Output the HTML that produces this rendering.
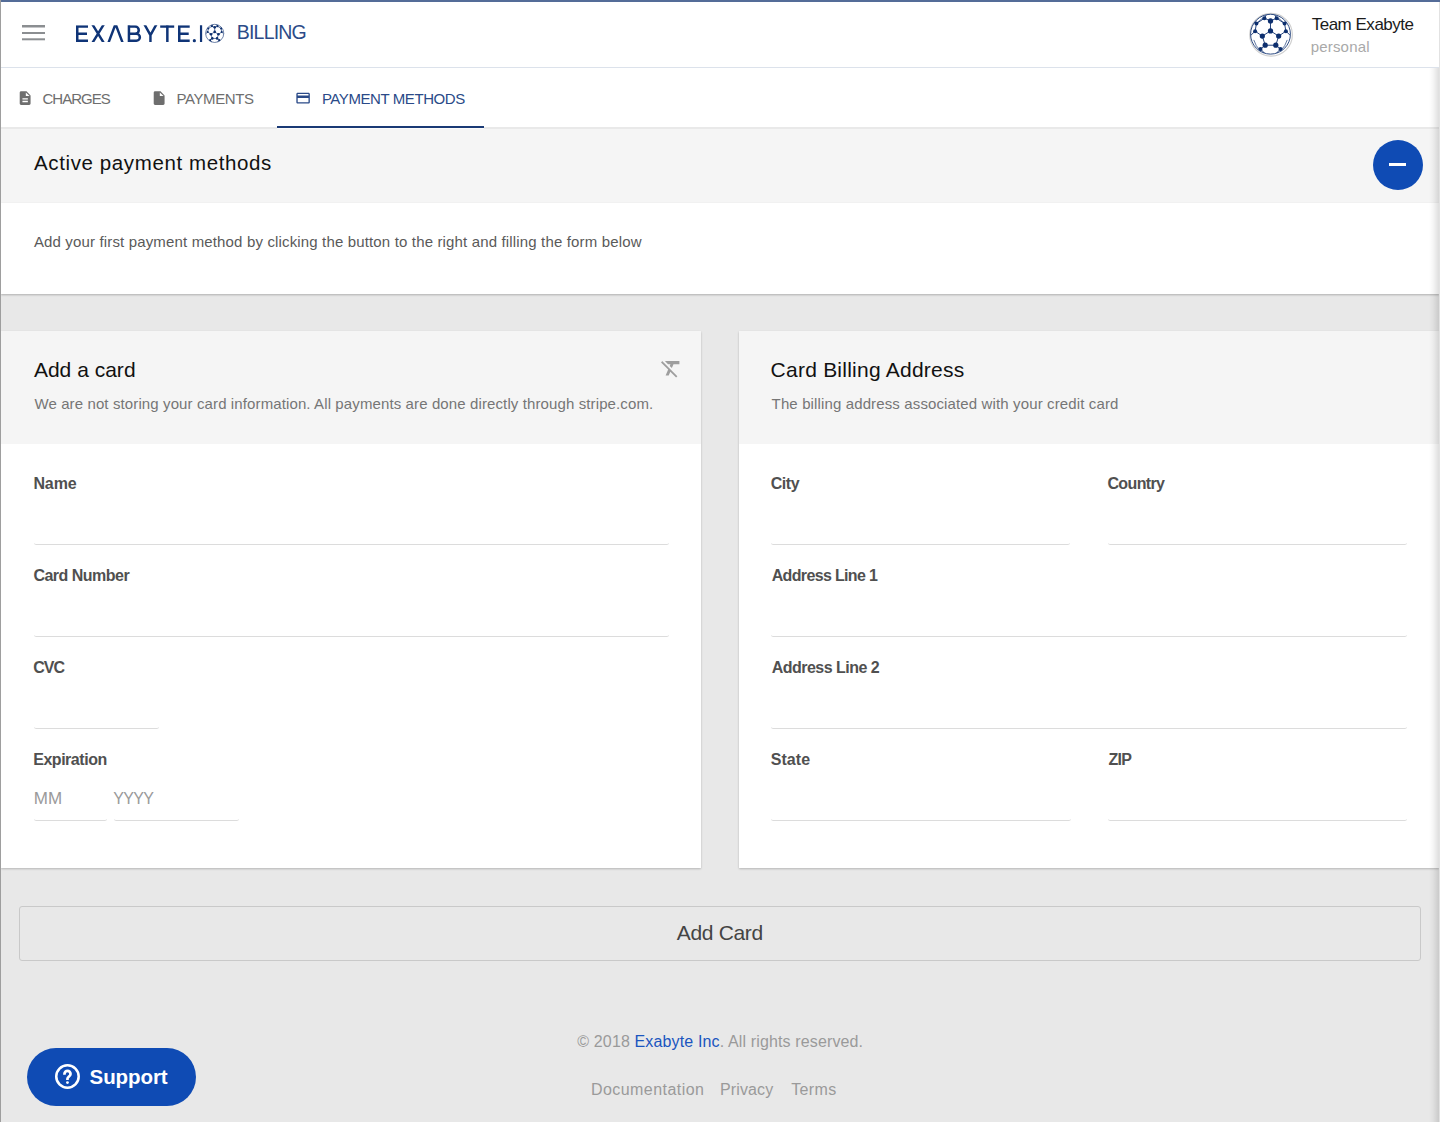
<!DOCTYPE html>
<html><head><meta charset="utf-8">
<style>
*{box-sizing:border-box;margin:0;padding:0}
html,body{width:1440px;height:1122px;overflow:hidden;background:#e8e8e8;font-family:"Liberation Sans",sans-serif}
.a{position:absolute}
.t{position:absolute;white-space:nowrap;line-height:1}
#topline{left:0;top:0;width:1440px;height:2px;background:#546c98}
#leftline{left:0;top:0;width:1px;height:1122px;background:#9e9e9e;z-index:50}
#header{left:1px;top:2px;width:1438px;height:66px;background:#fff;border-bottom:1px solid #dce2eb}
#rstrip{left:1439px;top:2px;width:1px;height:1120px;background:#e2e2e2;z-index:40}
#tabs{left:1px;top:68px;width:1438px;height:60px;background:#fff}
#tabline{left:1px;top:127px;width:1438px;height:2px;background:#e9e9e9}
#uline{left:277px;top:126px;width:207px;height:2px;background:#1a3a75;box-shadow:0 1px 0 #fbfbfb}
#sec1h{left:1px;top:129px;width:1438px;height:74px;background:#f5f5f5}
#sec1b{left:1px;top:203px;width:1438px;height:91px;background:#fff;box-shadow:0 1px 2px rgba(0,0,0,.25)}
#fab{left:1373px;top:140px;width:50px;height:50px;border-radius:50%;background:#0f4bb4}
#fabbar{left:1389px;top:162.75px;width:17px;height:2.8px;background:#fff}
.card{top:331px;width:700px;height:537px;background:#fff;box-shadow:0 1px 2px rgba(0,0,0,.22)}
.cardh{left:0;top:0;width:700px;height:113px;background:#f5f5f5}
#rshadow{left:1429px;top:68px;width:10px;height:1054px;background:linear-gradient(to right,rgba(0,0,0,0),rgba(0,0,0,.035) 40%,rgba(0,0,0,.13));z-index:30}
.ul{position:absolute;height:6px;margin-top:-5px;border-bottom:1px solid #dcdcdc;border-radius:2.5px}
.lbl{font-weight:bold;color:#4a4a4a}
#btn{left:19px;top:906px;width:1402px;height:55px;border:1px solid #c9c9c9;border-radius:3px}
#supbtn{left:27px;top:1048px;width:169px;height:58px;border-radius:29px;background:#0f4bb4;z-index:60}
</style></head><body>
<div class="a" id="topline"></div>
<div class="a" id="leftline"></div>
<div class="a" id="rstrip"></div>
<div class="a" id="header"></div>
<div class="a" id="tabs"></div>
<div class="a" id="tabline"></div>
<div class="a" id="uline"></div>
<div class="a" id="sec1h"></div>
<div class="a" id="sec1b"></div>
<div class="a" id="fab"></div>
<div class="a" id="fabbar"></div>
<div class="a card" style="left:1px"><div class="a cardh"></div></div>
<div class="a card" style="left:739px"><div class="a cardh"></div></div>
<div class="a" id="rshadow"></div>
<div class="a" id="btn"></div>
<div class="a" id="supbtn"></div>
<!--UL-->
<div class="ul" style="left:34px;top:544px;width:635px"></div>
<div class="ul" style="left:34px;top:636px;width:635px"></div>
<div class="ul" style="left:34px;top:728px;width:125px"></div>
<div class="ul" style="left:34px;top:820px;width:73px"></div>
<div class="ul" style="left:114px;top:820px;width:125px"></div>
<div class="ul" style="left:771px;top:544px;width:299px"></div>
<div class="ul" style="left:1108px;top:544px;width:299px"></div>
<div class="ul" style="left:771px;top:636px;width:636px"></div>
<div class="ul" style="left:771px;top:728px;width:636px"></div>
<div class="ul" style="left:771px;top:820px;width:300px"></div>
<div class="ul" style="left:1108px;top:820px;width:299px"></div>

<svg class="a" style="left:21px;top:24px" width="26" height="18" viewBox="0 0 26 18"><rect x="1" y="1" width="23" height="2.5" fill="#8b8e91"/><rect x="1" y="8" width="23" height="2" fill="#8b8e91"/><rect x="1" y="14.3" width="23" height="2" fill="#8b8e91"/></svg>
<svg class="a" style="left:17.2px;top:89.7px" width="16.3" height="16.3" viewBox="0 0 24 24"><path fill="#6e6e6e" d="M14 2H6c-1.1 0-1.99.9-1.99 2L4 20c0 1.1.89 2 1.99 2H18c1.1 0 2-.9 2-2V8l-6-6zm2 16H8v-2h8v2zm0-4H8v-2h8v2zm-3-5V3.5L18.5 9H13z"/></svg>
<svg class="a" style="left:150.5px;top:89.7px" width="16.3" height="16.3" viewBox="0 0 24 24"><path fill="#6e6e6e" d="M6 2c-1.1 0-1.99.9-1.99 2L4 20c0 1.1.89 2 1.99 2H18c1.1 0 2-.9 2-2V8l-6-6H6zm7 7V3.5L18.5 9H13z"/></svg>
<svg class="a" style="left:294.75px;top:89.6px" width="16.2" height="16.2" viewBox="0 0 24 24"><path fill="#2a4a88" d="M20 4H4c-1.11 0-1.99.89-1.99 2L2 18c0 1.11.89 2 2 2h16c1.11 0 2-.89 2-2V6c0-1.11-.89-2-2-2zm0 14H4v-6h16v6zm0-10H4V6h16v2z"/></svg>

<svg width="0" height="0" style="position:absolute"><defs>
<g id="ball">
<circle cx="50" cy="50" r="48.8" fill="none" stroke="#0d2f6e" stroke-width="2.1"/>
<g stroke="#0d2f6e" stroke-width="2.2" fill="none">
<path d="M50 17.4V41.9L30 54.7L37 77H63L70 54.7L50 41.9 M30 54.7L12.3 42.6L15.5 24L35 11L50 17.4L65 11L84.5 24L87.7 42.6L70 54.7 M37 77L25.5 86.3 M63 77L74.5 86.3 M35 11L39.7 2.7 M65 11L60.3 2.7 M12.3 42.6L2.4 52 M87.7 42.6L97.6 52 M25.5 86.3L34.8 96 M74.5 86.3L65.2 96"/>
<path d="M19 20.5L33 8.5 M81 20.5L67 8.5 M9 64 Q14 80 24 89 M91 64 Q86 80 76 89" stroke-width="1.6"/>
</g>
<g fill="#0d2f6e">
<circle cx="50" cy="17.4" r="6.4"/><circle cx="50" cy="41.9" r="6.4"/>
<circle cx="30" cy="54.7" r="6.4"/><circle cx="70" cy="54.7" r="6.4"/>
<circle cx="37" cy="77" r="6.4"/><circle cx="63" cy="77" r="6.4"/>
<circle cx="35" cy="11" r="4.9"/><circle cx="65" cy="11" r="4.9"/>
<circle cx="15.5" cy="24" r="4.9"/><circle cx="84.5" cy="24" r="4.9"/>
<circle cx="12.3" cy="42.6" r="4.9"/><circle cx="87.7" cy="42.6" r="4.9"/>
<circle cx="25.5" cy="86.3" r="4.9"/><circle cx="74.5" cy="86.3" r="4.9"/>
</g>
</g><g id="ball2">
<circle cx="50" cy="50" r="48.8" fill="none" stroke="#0d2f6e" stroke-width="3.2"/>
<g stroke="#0d2f6e" stroke-width="3.4" fill="none">
<path d="M50 17.4V41.9L30 54.7L37 77H63L70 54.7L50 41.9 M30 54.7L12.3 42.6L15.5 24L35 11L50 17.4L65 11L84.5 24L87.7 42.6L70 54.7 M37 77L25.5 86.3 M63 77L74.5 86.3 M35 11L39.7 2.7 M65 11L60.3 2.7 M12.3 42.6L2.4 52 M87.7 42.6L97.6 52 M25.5 86.3L34.8 96 M74.5 86.3L65.2 96"/>
<path d="M19 20.5L33 8.5 M81 20.5L67 8.5 M9 64 Q14 80 24 89 M91 64 Q86 80 76 89" stroke-width="0"/>
</g>
<g fill="#0d2f6e">
<circle cx="50" cy="17.4" r="7"/><circle cx="50" cy="41.9" r="7"/>
<circle cx="30" cy="54.7" r="7"/><circle cx="70" cy="54.7" r="7"/>
<circle cx="37" cy="77" r="7"/><circle cx="63" cy="77" r="7"/>
<circle cx="35" cy="11" r="5.6"/><circle cx="65" cy="11" r="5.6"/>
<circle cx="15.5" cy="24" r="5.6"/><circle cx="84.5" cy="24" r="5.6"/>
<circle cx="12.3" cy="42.6" r="5.6"/><circle cx="87.7" cy="42.6" r="5.6"/>
<circle cx="25.5" cy="86.3" r="5.6"/><circle cx="74.5" cy="86.3" r="5.6"/>
</g>
</g></defs></svg>
<svg class="a" style="left:0;top:0;z-index:5" width="240" height="60" viewBox="0 0 240 60">
<defs><clipPath id="lc"><rect x="60" y="25.25" width="145" height="16.75"/></clipPath></defs>
<g clip-path="url(#lc)" fill="none" stroke="#0f3477" stroke-width="2.5" stroke-linejoin="miter" stroke-miterlimit="10">
<path d="M88 26.5H77.25V40.75H88M77.25 33.8H87"/>
<path d="M92.3 24.2L103.9 43.1M103.9 24.2L92.3 43.1" stroke-width="2.45"/>
<path d="M108.35 43.1L115.55 24L122.75 43.1" stroke-width="2.45"/>
<path d="M128.95 24V43M127.7 26.5H135.1A3.65 3.65 0 0 1 135.1 33.8H127.7M127.7 33.8H136.4A3.475 3.475 0 0 1 136.4 40.75H127.7"/>
<path d="M144 23.5L150.45 35.2L156.9 23.5M150.45 35.2V43" stroke-width="2.45"/>
<path d="M160.2 26.5H174.2M167.35 24V43" stroke-width="2.5"/>
<path d="M189.7 26.5H179.25V40.75H189.7M179.25 33.8H188.7"/>
<path d="M201.05 24V43" stroke-width="2.2"/>
</g>
<circle cx="194.35" cy="40.7" r="1.6" fill="#0f3477"/>
<g transform="translate(205.4 24.1) scale(0.186)"><use href="#ball2"/></g>
</svg>
<svg class="a" style="left:1240px;top:4px;z-index:5" width="62" height="62" viewBox="1240 4 62 62">
<circle cx="1271.05" cy="34.75" r="21.3" fill="#fff" stroke="#cfcfcf" stroke-width="1.2"/>
<g transform="translate(1250.1 13.8) scale(0.408)"><use href="#ball"/></g>
</svg>
<svg class="a" style="left:659.1px;top:355.7px" width="24.5" height="24.5" viewBox="0 0 24 24"><path fill="#9e9e9e" d="M3.27 5L2 6.27l6.97 6.97L6.5 19h3l1.57-3.66L16.73 21 18 19.73 3.55 5.27 3.27 5zM6 5v.18L8.82 8h2.4l-.72 1.68 2.1 2.1L14.21 8H20V5H6z"/></svg>
<svg class="a" style="left:50px;top:1058px;z-index:62" width="36" height="36" viewBox="50 1058 36 36"><circle cx="67.47" cy="1076.5" r="11.22" fill="none" stroke="#fff" stroke-width="2.55"/><path d="M64.45 1074.8V1073.9A3.05 3.05 0 0 1 70.55 1073.9C70.55 1076.2 67.45 1076.6 67.45 1078.8V1079.9" fill="none" stroke="#fff" stroke-width="2.7"/><circle cx="67.45" cy="1082.6" r="1.45" fill="#fff"/></svg>
<!--/UL-->
<!--TEXT-->
<div class="t" id="billing" style="left:236.75px;top:22.79px;font-size:19.5px;letter-spacing:-0.792px;color:#2c4b88;">BILLING</div>
<div class="t" id="team" style="left:1311.7px;top:15.51px;font-size:17px;letter-spacing:-0.491px;color:#1b1b1b;">Team Exabyte</div>
<div class="t" id="personal" style="left:1310.7px;top:39.3px;font-size:15px;letter-spacing:0.186px;color:#a9a9a9;">personal</div>
<div class="t" id="charges" style="left:42.5px;top:91.3px;font-size:15px;letter-spacing:-0.983px;color:#6e6e6e;">CHARGES</div>
<div class="t" id="payments" style="left:176.4px;top:91.3px;font-size:15px;letter-spacing:-0.386px;color:#6e6e6e;">PAYMENTS</div>
<div class="t" id="pm" style="left:321.9px;top:91.3px;font-size:15px;letter-spacing:-0.414px;color:#2a4a88;">PAYMENT METHODS</div>
<div class="t" id="active" style="left:34.0px;top:153.45px;font-size:20.5px;letter-spacing:0.614px;color:#111111;">Active payment methods</div>
<div class="t" id="addfirst" style="left:33.9px;top:233.5px;font-size:15px;letter-spacing:0.153px;color:#5a5a5a;">Add your first payment method by clicking the button to the right and filling the form below</div>
<div class="t" id="addacard" style="left:33.9px;top:359.32px;font-size:21px;letter-spacing:0.011px;color:#111111;">Add a card</div>
<div class="t" id="notstoring" style="left:34.4px;top:395.5px;font-size:15px;letter-spacing:0.115px;color:#767676;">We are not storing your card information. All payments are done directly through stripe.com.</div>
<div class="t" id="cba" style="left:770.6px;top:359.32px;font-size:21px;letter-spacing:0.237px;color:#111111;">Card Billing Address</div>
<div class="t" id="tba" style="left:771.6px;top:395.5px;font-size:15px;letter-spacing:0.131px;color:#767676;">The billing address associated with your credit card</div>
<div class="t" id="name" style="left:33.4px;top:476.46px;font-size:16px;letter-spacing:-0.1px;color:#505050;font-weight:bold;">Name</div>
<div class="t" id="cardnum" style="left:33.4px;top:568.16px;font-size:16px;letter-spacing:-0.51px;color:#505050;font-weight:bold;">Card Number</div>
<div class="t" id="cvc" style="left:33.2px;top:660.46px;font-size:16px;letter-spacing:-1.0px;color:#505050;font-weight:bold;">CVC</div>
<div class="t" id="exp" style="left:33.2px;top:752.46px;font-size:16px;letter-spacing:-0.467px;color:#505050;font-weight:bold;">Expiration</div>
<div class="t" id="city" style="left:770.7px;top:476.46px;font-size:16px;letter-spacing:-0.433px;color:#505050;font-weight:bold;">City</div>
<div class="t" id="country" style="left:1107.4px;top:476.46px;font-size:16px;letter-spacing:-0.617px;color:#505050;font-weight:bold;">Country</div>
<div class="t" id="al1" style="left:771.7px;top:568.16px;font-size:16px;letter-spacing:-0.654px;color:#505050;font-weight:bold;">Address Line 1</div>
<div class="t" id="al2" style="left:771.7px;top:660.46px;font-size:16px;letter-spacing:-0.515px;color:#505050;font-weight:bold;">Address Line 2</div>
<div class="t" id="state" style="left:770.7px;top:752.46px;font-size:16px;letter-spacing:0.075px;color:#505050;font-weight:bold;">State</div>
<div class="t" id="zip" style="left:1108.4px;top:752.46px;font-size:16px;letter-spacing:-0.7px;color:#505050;font-weight:bold;">ZIP</div>
<div class="t" id="mm" style="left:33.7px;top:789.81px;font-size:17px;letter-spacing:0.1px;color:#9a9a9a;">MM</div>
<div class="t" id="yyyy" style="left:113.2px;top:790.66px;font-size:16px;letter-spacing:-0.633px;color:#9a9a9a;">YYYY</div>
<div class="t" id="addcard" style="left:676.7px;top:922.32px;font-size:21px;letter-spacing:-0.314px;color:#444444;">Add Card</div>
<div class="t" id="footer" style="left:577.3px;top:1034.16px;font-size:16px;letter-spacing:0.138px;color:#9a9a9a;">© 2018 <span style="color:#1a55bf">Exabyte Inc</span>. All rights reserved.</div>
<div class="t" id="doc" style="left:590.9px;top:1082.06px;font-size:16px;letter-spacing:0.45px;color:#9a9a9a;">Documentation</div>
<div class="t" id="privacy" style="left:720.0px;top:1082.06px;font-size:16px;letter-spacing:0.125px;color:#9a9a9a;">Privacy</div>
<div class="t" id="terms" style="left:791.25px;top:1082.06px;font-size:16px;letter-spacing:0.338px;color:#9a9a9a;">Terms</div>
<div class="t" id="support" style="left:89.6px;top:1067.15px;font-size:20.5px;letter-spacing:-0.083px;color:#ffffff;font-weight:bold;z-index:61;">Support</div>
<!--/TEXT-->
</body></html>
